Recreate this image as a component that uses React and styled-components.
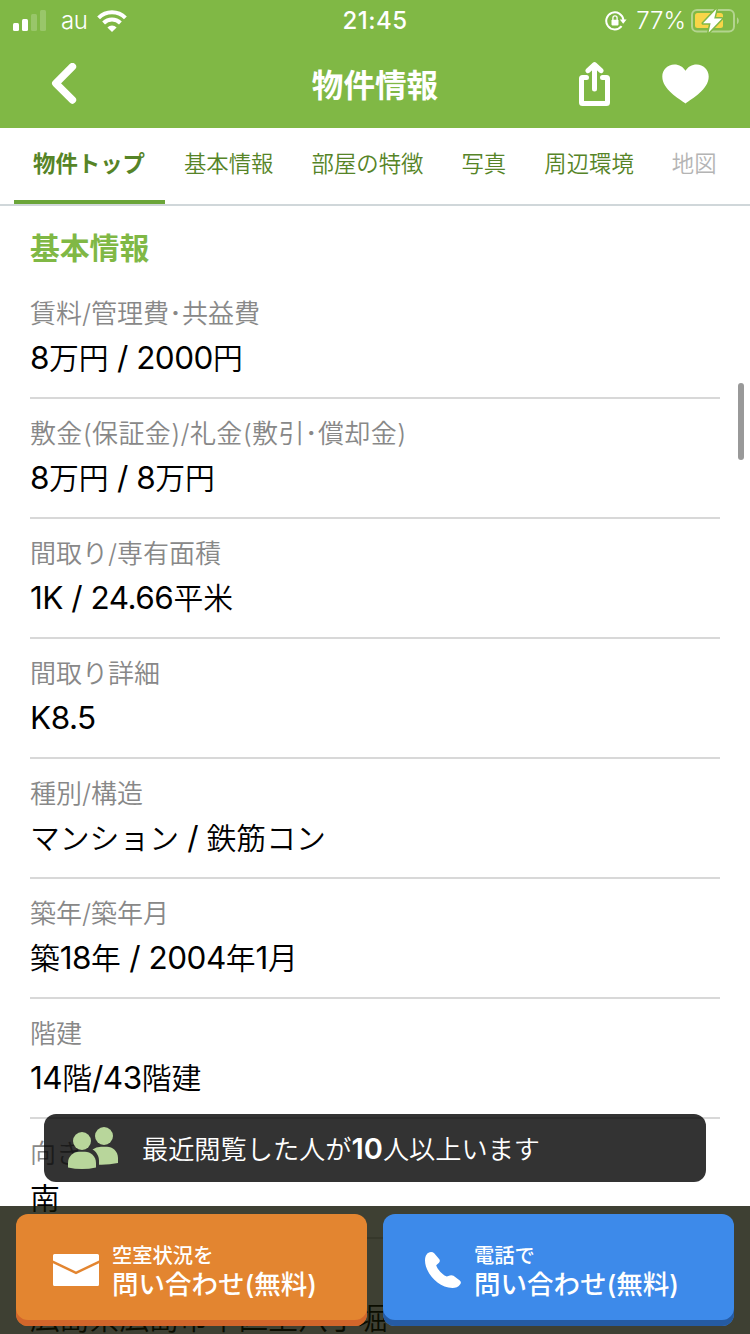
import React from 'react';
import styled, { createGlobalStyle } from 'styled-components';

const GlobalStyle = createGlobalStyle`
  * {
    box-sizing: border-box;
  }

  body {
    margin: 0;
    background: #fff;
    font-family: Inter, 'Noto Sans CJK JP', sans-serif;
  }
`;

const Screen = styled.div`
  position: relative;
  width: 750px;
  height: 1334px;
  overflow: hidden;
  background: #fff;
`;

const Header = styled.header`
  height: 128px;
  background: #80b845;
  color: #fff;
`;

const StatusBar = styled.div`
  display: grid;
  grid-template-columns: 1fr auto 1fr;
  align-items: center;
  height: 40px;
  padding: 0 11px 0 13px;
  font-size: 24px;
  line-height: 40px;
`;

const StatusGroup = styled.div`
  display: flex;
  align-items: center;
  justify-content: ${props => (props.$end ? 'flex-end' : 'flex-start')};
`;

const Carrier = styled.span`
  margin: 1px 10px 0 15px;
  font-size: 24px;
  font-weight: 350;
  letter-spacing: -0.5px;
`;

const Clock = styled.span`
  margin-left: -2px;
  padding-top: 1px;
  font-size: 24px;
  font-weight: 500;
  letter-spacing: 0.5px;
`;

const BatteryLevel = styled.span`
  margin: 1px 5px 0 9px;
  font-weight: 350;
`;

const NavBar = styled.div`
  display: grid;
  grid-template-columns: 1fr auto 1fr;
  align-items: center;
  height: 88px;
  padding: 0 41px 0 51px;
`;

const NavTitle = styled.h1`
  margin: 3px 10px 0 0;
  font-size: 31.6px;
  font-weight: 700;
  line-height: 84px;
`;

const NavActions = styled.div`
  display: flex;
  justify-content: flex-end;
  align-items: center;
  gap: 51px;
`;

const IconButton = styled.button`
  display: flex;
  padding: 0;
  border: none;
  background: none;
  color: inherit;
`;

const Tabs = styled.nav`
  display: flex;
  height: 78px;
  padding-left: 14px;
  border-bottom: 2px solid #d0d7da;
`;

const Tab = styled.a`
  height: 76px;
  padding: ${props => (props.$active ? '0 20px 0 19px' : '0 19px')};
  border-bottom: ${props => (props.$active ? '4px solid #6ba539' : 'none')};
  color: ${props => (props.$disabled ? '#b4b4b4' : '#568427')};
  font-size: 22.4px;
  font-weight: ${props => (props.$active ? 700 : 350)};
  line-height: 72px;
  white-space: nowrap;
`;

const Details = styled.main`
  padding: 0 30px;
`;

const SectionTitle = styled.h2`
  height: 73px;
  margin: 0;
  color: #80b845;
  font-size: 29.8px;
  font-weight: 700;
  line-height: 84px;
`;

const Row = styled.div`
  height: 120px;
  padding-top: 16px;
  border-bottom: 2px solid #d8d8d8;
  white-space: nowrap;
`;

const Label = styled.div`
  height: 39px;
  color: #888;
  font-size: 26px;
  font-weight: 350;
  line-height: 38px;
  letter-spacing: ${props => props.$spacing || 0}px;
`;

const Value = styled.div`
  color: #000;
  font-size: 29.8px;
  font-weight: 350;
  line-height: 48px;
`;

const Latin = styled.span`
  font-size: 31.5px;
  font-weight: 400;
  letter-spacing: -0.5px;
`;

const ScrollThumb = styled.div`
  position: absolute;
  top: 383px;
  right: 6px;
  width: 6px;
  height: 77px;
  border-radius: 3px;
  background: #999;
`;

const Toast = styled.div`
  position: absolute;
  left: 44px;
  top: 1114px;
  display: flex;
  align-items: center;
  gap: 24px;
  width: 662px;
  height: 68px;
  padding-left: 24px;
  border-radius: 12px;
  background: rgba(0, 0, 0, 0.8);
  color: #fff;
`;

const ToastText = styled.span`
  font-size: 26.2px;
  font-weight: 350;

  strong {
    font-size: 29px;
    font-weight: 600;
  }
`;

const ContactBar = styled.footer`
  position: absolute;
  left: 0;
  bottom: 0;
  display: grid;
  grid-template-columns: 1fr 1fr;
  gap: 16px;
  width: 750px;
  height: 128px;
  padding: 8px 16px;
  background: rgba(14, 16, 0, 0.8);
`;

const ContactButton = styled.button`
  display: flex;
  align-items: center;
  gap: ${props => props.$gap}px;
  height: 112px;
  padding: 0 0 0 ${props => props.$inset}px;
  border: none;
  border-radius: 12px;
  background: ${props => props.$color};
  box-shadow: inset 0 -6px 0 ${props => props.$edge};
  color: #fff;
  font-family: inherit;
  text-align: left;
`;

const ContactText = styled.span`
  display: flex;
  flex-direction: column;
  padding-top: 2px;
  font-size: 26.5px;
  font-weight: 500;
  line-height: 30px;
  white-space: nowrap;
`;

const ContactLead = styled.span`
  font-size: 20.3px;
  line-height: 26px;
`;

const tabs = ['物件トップ', '基本情報', '部屋の特徴', '写真', '周辺環境', '地図'];

const rows = [
  { label: '賃料/管理費･共益費', value: '8万円 / 2000円' },
  { label: '敷金(保証金)/礼金(敷引･償却金)', value: '8万円 / 8万円', spacing: 0.35 },
  { label: '間取り/専有面積', value: '1K / 24.66平米' },
  { label: '間取り詳細', value: 'K8.5' },
  { label: '種別/構造', value: 'マンション / 鉄筋コン' },
  { label: '築年/築年月', value: '築18年 / 2004年1月' },
  { label: '階建', value: '14階/43階建' },
  { label: '向き', value: '南' },
  { label: '', value: '広島県広島市中区上八丁堀' }
];

// Digits and slashes are set slightly larger than the kanji around them
const MixedText = ({ text }) =>
  text
    .split(/([\x20-\x7e]+)/)
    .map((part, index) => (index % 2 ? <Latin key={index}>{part}</Latin> : part));

const SignalIcon = () => (
  <svg width="33" height="21" viewBox="0 0 33 21" fill="#fff">
    <rect x="0" y="13" width="6" height="8" rx="1.5" />
    <rect x="9" y="9" width="6" height="12" rx="1.5" />
    <rect x="18" y="4" width="6" height="17" rx="1.5" opacity="0.2" />
    <rect x="27" y="0" width="6" height="21" rx="1.5" opacity="0.2" />
  </svg>
);

const WifiIcon = () => (
  <svg width="30" height="22" viewBox="0 0 30 22" fill="none" stroke="#fff">
    <path d="M1.6 7.8a19 19 0 0 1 26.8 0" strokeWidth="4" />
    <path d="M6.6 13a12 12 0 0 1 16.8 0" strokeWidth="4" />
    <path d="M15 22l-4.6-4.6a6.6 6.6 0 0 1 9.2 0z" fill="#fff" stroke="none" />
  </svg>
);

const RotationLockIcon = () => (
  <svg width="22" height="20" viewBox="0 0 22 20" fill="none" stroke="#fff">
    <path d="M16.6 15.2A8.6 8.6 0 1 1 18.4 9" strokeWidth="2" />
    <path d="M14.8 8.400h6.800l-3.400 4.400z" fill="#fff" stroke="none" />
    <rect x="6.500" y="8.800" width="7" height="5.600" rx="0.8" fill="#fff" stroke="none" />
    <path d="M7.900 9V7a2.100 2.100 0 0 1 4.200 0v2" strokeWidth="1.3" />
  </svg>
);

const BatteryIcon = () => (
  <svg width="48" height="24" viewBox="0 0 48 24">
    <rect x="1" y="1" width="42" height="21.5" rx="5" fill="none" stroke="#fff" strokeWidth="2" opacity="0.4" />
    <rect x="4" y="4" width="28" height="15" rx="2.5" fill="#f8d548" />
    <path d="M46 8.2c2.4 1.6 2.4 5.6 0 7z" fill="#fff" opacity="0.4" />
    <path d="M25.5 0L12 14.3h7.6L17.6 23.5 31 9.5h-7.8z" fill="#fff" stroke="#80b845" strokeWidth="3" strokeLinejoin="round" paintOrder="stroke" />
  </svg>
);

const BackIcon = () => (
  <svg width="28" height="42" viewBox="0 0 28 42" fill="none" stroke="#fff" strokeWidth="7.5" strokeLinecap="round" strokeLinejoin="round">
    <path d="M21.4 3.7L4.8 20.3l16.6 16.6" />
  </svg>
);

const ShareIcon = () => (
  <svg width="32" height="44" viewBox="0 0 32 44" fill="none" stroke="#fff" strokeWidth="5" strokeLinecap="round" strokeLinejoin="round">
    <path d="M7.5 15.5h-4q-1 0-1 1v24q0 1 1 1h24q1 0 1-1v-24q0-1-1-1h-4" />
    <path d="M15.5 27V4M9 8.7l6.5-6L22 8.7" />
  </svg>
);

const HeartIcon = () => (
  <svg width="47" height="40" viewBox="0 0 47 40" fill="#fff">
    <path d="M23.5 39.5C17 35 0.3 25.5 0.3 12.6 0.3 5.4 5.8 0.4 12.3 0.4c5 0 8.8 2.4 11.2 6.3C25.9 2.8 29.7 0.4 34.7 0.4 41.2 0.4 46.7 5.4 46.7 12.6 46.7 25.5 30 35 23.5 39.5z" />
  </svg>
);

const PeopleIcon = () => (
  <svg width="50" height="42" viewBox="0 0 50 42" fill="#b8d69b">
    <circle cx="36" cy="9" r="9" />
    <circle cx="14" cy="14" r="9" />
    <path d="M0 40.5V36C0 29 5.5 24.7 11 24.7h6c5.5 0 11 4.3 11 11.3v4.5q-14 3-28 0z" />
    <path d="M24.5 22.5Q28 19.7 33 19.7h6c5.5 0 11 4.3 11 11.3v5q-9.5 2-19 1.7v-4C31 28.5 28 24.5 24.5 22.5z" />
  </svg>
);

const MailIcon = () => (
  <svg width="46" height="32" viewBox="0 0 46 32" fill="#fff">
    <path d="M1.5 0h43A1.5 1.5 0 0 1 46 1.5V6.500L23 17.500 0 6.500v-5A1.500 1.500 0 0 1 1.500 0z" />
    <path d="M0 9.200l23 11 23-11v21.300a1.500 1.500 0 0 1-1.500 1.500h-43A1.500 1.500 0 0 1 0 30.500z" />
  </svg>
);

const PhoneIcon = () => (
  <svg width="36" height="36" viewBox="0 0 36 36" fill="#fff">
    <path d="M6 0Q8 0 9.2 1.3L14.3 7.3Q15.5 9 14 10.8L11.2 13.3C12.5 17.5 17 22.5 21.8 24.6L24.8 23.4Q26.8 22.7 28.5 23.8L34.8 28.4Q36.6 30 35.4 32C33.5 35 30.5 36 27.5 36 13 35.8 0 20.5 0 8.5 0 3.5 2.5 0 6 0z" />
  </svg>
);

const App = () => {
  return (
    <Screen>
      <GlobalStyle />
      <Header>
        <StatusBar>
          <StatusGroup>
            <SignalIcon />
            <Carrier>au</Carrier>
            <WifiIcon />
          </StatusGroup>
          <Clock>21:45</Clock>
          <StatusGroup $end>
            <RotationLockIcon />
            <BatteryLevel>77%</BatteryLevel>
            <BatteryIcon />
          </StatusGroup>
        </StatusBar>
        <NavBar>
          <IconButton aria-label="戻る"><BackIcon /></IconButton>
          <NavTitle>物件情報</NavTitle>
          <NavActions>
            <IconButton aria-label="共有"><ShareIcon /></IconButton>
            <IconButton aria-label="お気に入り"><HeartIcon /></IconButton>
          </NavActions>
        </NavBar>
      </Header>

      <Tabs>
        {tabs.map((tab, index) => (
          <Tab key={tab} $active={index === 0} $disabled={index === tabs.length - 1}>
            {tab}
          </Tab>
        ))}
      </Tabs>

      <Details>
        <SectionTitle>基本情報</SectionTitle>
        {rows.map(row => (
          <Row key={row.value}>
            <Label $spacing={row.spacing}>{row.label}</Label>
            <Value><MixedText text={row.value} /></Value>
          </Row>
        ))}
      </Details>

      <ScrollThumb />

      <Toast>
        <PeopleIcon />
        <ToastText>最近閲覧した人が<strong>10</strong>人以上います</ToastText>
      </Toast>

      <ContactBar>
        <ContactButton $color="#e38530" $edge="#d2662b" $inset={37} $gap={13}>
          <MailIcon />
          <ContactText>
            <ContactLead>空室状況を</ContactLead>
            問い合わせ(無料)
          </ContactText>
        </ContactButton>
        <ContactButton $color="#3d8aea" $edge="#255ba3" $inset={42} $gap={13}>
          <PhoneIcon />
          <ContactText>
            <ContactLead>電話で</ContactLead>
            問い合わせ(無料)
          </ContactText>
        </ContactButton>
      </ContactBar>
    </Screen>
  );
};

export default App;
